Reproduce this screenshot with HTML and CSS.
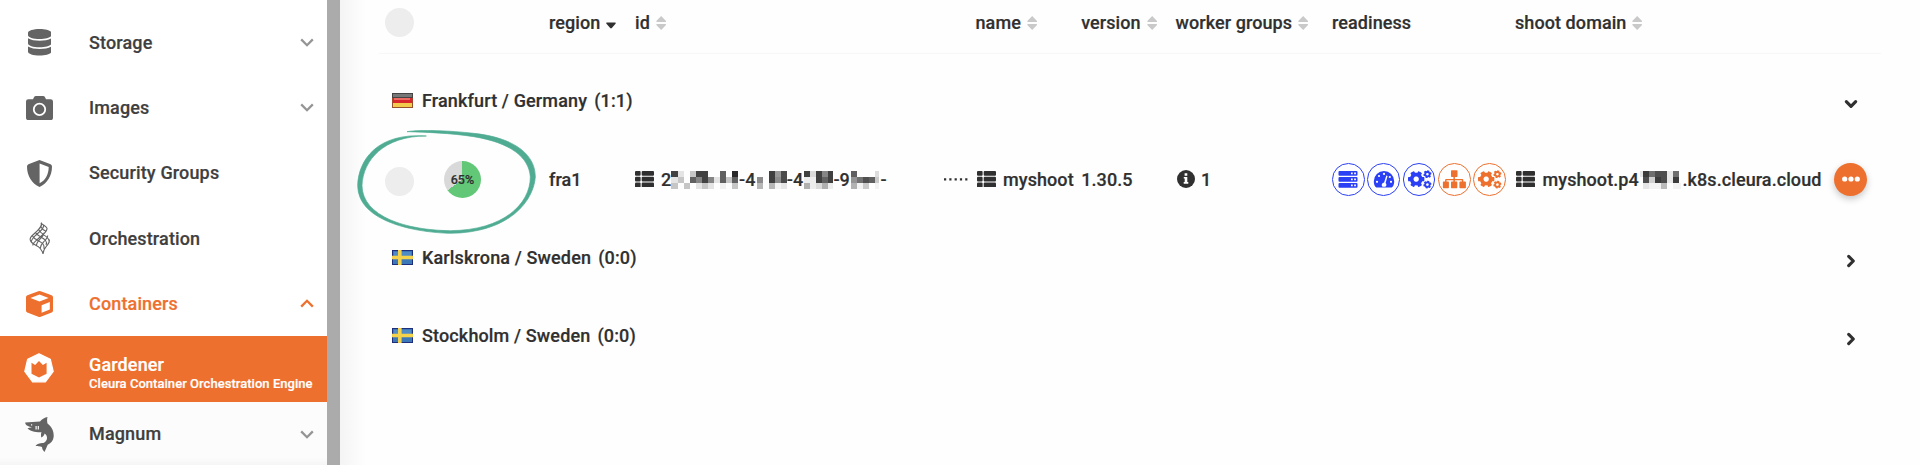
FILE: index.html
```html
<!DOCTYPE html>
<html lang="en">
<head>
<meta charset="utf-8">
<title>Gardener</title>
<link rel="stylesheet" href="styles.css">
</head>
<body>
<svg class="defs" width="0" height="0" aria-hidden="true">
  <symbol id="cog" viewBox="0 0 512 512"><path d="M487.4 315.7l-42.6-24.6c4.3-23.2 4.3-47 0-70.2l42.6-24.6c4.9-2.8 7.1-8.6 5.5-14-11.1-35.6-30-67.8-54.7-94.6-3.8-4.1-10-5.1-14.8-2.3L380.8 110c-17.9-15.4-38.5-27.3-60.8-35.1V25.8c0-5.6-3.9-10.5-9.4-11.7-36.7-8.2-74.3-7.8-109.2 0-5.5 1.2-9.4 6.1-9.4 11.7V75c-22.2 7.9-42.8 19.8-60.8 35.1L88.7 85.5c-4.9-2.8-11-1.9-14.8 2.3-24.7 26.7-43.6 58.9-54.7 94.6-1.7 5.4.6 11.2 5.5 14L67.3 221c-4.3 23.2-4.3 47 0 70.2l-42.6 24.6c-4.9 2.8-7.1 8.6-5.5 14 11.1 35.6 30 67.8 54.7 94.6 3.8 4.1 10 5.1 14.8 2.3l42.6-24.6c17.9 15.4 38.5 27.3 60.8 35.1v49.2c0 5.6 3.9 10.5 9.4 11.7 36.7 8.2 74.3 7.8 109.2 0 5.5-1.2 9.4-6.1 9.4-11.7v-49.2c22.2-7.9 42.8-19.8 60.8-35.1l42.6 24.6c4.9 2.8 11 1.9 14.8-2.3 24.7-26.7 43.6-58.9 54.7-94.6 1.5-5.5-.7-11.3-5.6-14.1zM256 336c-44.1 0-80-35.9-80-80s35.9-80 80-80 80 35.9 80 80-35.9 80-80 80z"/></symbol>
  <symbol id="cogs" viewBox="0 0 30 30">
    <use href="#cog" x="3.7" y="6.6" width="17" height="17" transform="rotate(30 12.2 15.1)"/>
    <use href="#cog" x="19.2" y="6" width="8.4" height="8.4" transform="rotate(15 23.4 10.2)"/>
    <use href="#cog" x="19.2" y="16.4" width="8.4" height="8.4" transform="rotate(15 23.4 20.6)"/>
  </symbol>
  <symbol id="sort" viewBox="0 0 10 14"><path d="M5 0L9.9 5.1Q10 6 9.2 6H.8Q0 6 .1 5.1zM5 14L9.9 8.9Q10 8 9.2 8H.8Q0 8 .1 8.9z"/></symbol>
  <symbol id="list" viewBox="0 0 19 16.4">
    <rect width="5.6" height="4.8" rx="1"/><rect x="6.7" width="12.3" height="4.8" rx="1"/>
    <rect y="5.8" width="5.6" height="4.8" rx="1"/><rect x="6.7" y="5.8" width="12.3" height="4.8" rx="1"/>
    <rect y="11.6" width="5.6" height="4.8" rx="1"/><rect x="6.7" y="11.6" width="12.3" height="4.8" rx="1"/>
  </symbol>
  <symbol id="down" viewBox="0 0 14 9"><path d="M1.2 1.4L7 7.2l5.8-5.8" fill="none" stroke="currentColor" stroke-width="2.3"/></symbol>
  <symbol id="angle" viewBox="0 0 12 12"><path d="M2 4l4 4 4-4" fill="none" stroke="currentColor" stroke-width="2.7" stroke-linecap="round" stroke-linejoin="round"/></symbol>
  <symbol id="sweden" viewBox="0 0 21 15">
    <rect width="21" height="15" fill="#1d2f7c"/><rect x="1" y="1" width="19" height="13" fill="#3c78b8"/><rect x="2" y="2" width="17" height="4" fill="#4f8cc6"/>
    <path d="M6 0h3.6v15H6zM0 5.8h21v3.4H0z" fill="#f5d24b"/>
  </symbol>
</svg>
<div class="app">
  <nav class="sidebar">
    <a class="item"><span class="ico"><svg width="23.4" height="26.6" viewBox="0 0 448 512" preserveAspectRatio="none"><path d="M448 73v46c0 40-100 73-224 73S0 159 0 119V73C0 33 100 0 224 0s224 33 224 73zM448 176v103c0 40-100 73-224 73S0 319 0 279V176c48 33 136 48 224 48s176-15 224-48zm0 160v103c0 40-100 73-224 73S0 479 0 439V336c48 33 136 48 224 48s176-15 224-48z"/></svg></span><span class="label">Storage</span><svg class="chev" width="14" height="9"><use href="#down"/></svg></a>
    <a class="item"><span class="ico"><svg width="27" height="24" viewBox="0 0 27 24"><path fill-rule="evenodd" d="M2.400 3.200H7l1-2Q8.500 0 10 0h7q1.500 0 2 1.200l1 2h4.600Q27 3.200 27 5.600v15.800Q27 24 24.600 24H2.400Q0 24 0 21.400V5.600Q0 3.200 2.400 3.200zM13.500 6.800a6.600 6.600 0 1 0 0 13.200 6.600 6.600 0 0 0 0-13.200z"/><circle cx="13.500" cy="13.400" r="4.800"/></svg></span><span class="label">Images</span><svg class="chev" width="14" height="9"><use href="#down"/></svg></a>
    <a class="item"><span class="ico"><svg width="25" height="27" viewBox="0 0 25 27"><path fill-rule="evenodd" d="M12.500 0L23.600 4.300Q25 5 25 6.500C25 16 20 23.500 12.500 27 5 23.500 0 16 0 6.500Q0 5 1.400 4.300zM12.600 3.400v19.900C18.200 20.500 21.700 14.500 21.700 7z"/></svg></span><span class="label">Security Groups</span></a>
    <a class="item"><span class="ico"><svg class="mesh" width="22" height="33" viewBox="0 0 22 33"><path d="M12 .8C14 4 10 7 6.500 10.500S.5 15 1.200 18M12 .8c2 2.500 4 2.500 6 5.200M18 6c.5 4-4 6-8 10s-6.500 5-6.200 7.500M14.500 3.500C15 7 11 9 7.500 12.500S2 17.500 2.300 20.500M1.200 18c1.500 5 7.500 5 10 8.500 1.500 2 2.500 3 2.800 5.500M3.500 14c2 4 7.500 4.500 10.500 8 1.200 1.500 1.500 3 1 5M6.500 10.500c2 4 7 4.500 10 8 1.300 1.500 1.300 3 .5 4.500M9.500 7.500c2 4 6 5 9.200 8.500 1.500 1.800 2 3 1.500 4.500M12 5c1 2 2.500 3 4.500 4M14 32c0-4 2-6 4-8.500s3-3.500 2.200-6M11.200 26.500c0-4 2.500-5.500 4.800-8s2.800-3 2.700-5M7.500 23.500c0-3.500 2.500-5.500 5-8s2.700-3 2.700-5"/></svg></span><span class="label">Orchestration</span></a>
    <a class="item open"><span class="ico"><svg width="27" height="26" viewBox="0 0 27 26"><path fill-rule="evenodd" d="M12.300.3q1.200-.5 2.400 0l10.900 3.900Q27 4.800 27 6.300v13.200q0 1.500-1.300 2.100l-11 4.200q-1.200.4-2.400 0l-11-4.200Q0 21 0 19.500V6.300Q0 4.800 1.400 4.200zM13.500 3.600L4.400 7l9.100 3.500L22.600 7zM15.600 14.200v7.600l8.200-3.400v-7.500z"/></svg></span><span class="label">Containers</span><svg class="chev up" width="14" height="9"><use href="#down"/></svg></a>
    <a class="item active"><span class="ico"><svg width="30" height="30" viewBox="0 0 30 30"><path fill-rule="evenodd" d="M15 .8L26.300 6.200 29.200 18.400 21.400 28.800H8.600L.8 18.400 3.700 6.200z" stroke="#fff" stroke-width="1.200" stroke-linejoin="round"/><path fill="#ee702e" d="M7.500 9.800l3.600 2.200L15 8l3.900 4 3.700-2.200v11L15 24.400l-7.500-3.600z"/></svg></span><span class="label">Gardener<small>Cleura Container Orchestration Engine</small></span></a>
    <a class="item sub"><span class="ico"><svg width="29" height="35" viewBox="0 0 29 35"><path d="M.2 5.500C5 5 10 5 15 4.500 17 2 20 .5 22.500 0c-.6 2.500-.5 4.500 0 6.500 4 3 6.500 7.500 6.200 13-.3 4-2.500 6.500-6 8.200-1 2.300-2 4.800-3.200 7.300-1.500-1.500-2.300-3-2.500-5-2-.8-4-1-6.500-1 2-2.500 4.700-3.200 8-3 2.500-1.300 3.700-3.200 3.500-5.500-.2-2-1-3.200-2.500-4-.2 1.800-1.200 3-3.200 4-.5-2-.5-3.600.2-5.200C10 15.500 5 14 2.500 11.500c1.500-1 3-1.200 4.500-1C4 9.500.2 8.500.2 5.500z"/><path d="M6 7.200h1.200v1.200H6zM10.500 9h1.200v3.500h-1.200zM12.700 9h1.200v3.500h-1.200z" fill="#fcfcfc"/></svg></span><span class="label">Magnum</span><svg class="chev" width="14" height="9"><use href="#down"/></svg></a>
  </nav>
  <div class="scrollbar"></div>
  <main class="content">
    <div class="grid head">
      <div class="select"><span class="check"></span></div>
      <div>region<svg class="caret" width="10" height="7" viewBox="0 0 10 7"><path d="M.8.400h8.400q1 .5.300 1.400L5.800 6q-.8.800-1.600 0L.5 1.800Q-.2.900.8.400z"/></svg></div>
      <div>id<svg class="sort" width="10.400" height="14"><use href="#sort"/></svg></div>
      <div>name<svg class="sort" width="10.400" height="14"><use href="#sort"/></svg></div>
      <div>version<svg class="sort" width="10.400" height="14"><use href="#sort"/></svg></div>
      <div>worker groups<svg class="sort" width="10.400" height="14"><use href="#sort"/></svg></div>
      <div>readiness</div>
      <div>shoot domain<svg class="sort" width="10.400" height="14"><use href="#sort"/></svg></div>
    </div>
    <section class="group">
      <svg class="flag" width="21" height="15" viewBox="0 0 21 15"><rect width="21" height="15" fill="#96502a"/><path fill="#444" d="M0 0h21v5H0z"/><path fill="#777" d="M1 1h19v3H1z"/><path fill="#d8262c" d="M.7 5h19.600v5H.7z"/><path fill="#ec6a62" d="M2 5h16v2H2z"/><path fill="#f3cb4c" d="M1 10h19v4H1z"/></svg>
      <span class="place">Frankfurt / Germany <span class="count">(1:1)</span></span>
      <svg class="toggle" width="14" height="14"><use href="#angle"/></svg>
    </section>
    <div class="grid row">
      <div class="select"><span class="check low"></span><span class="pie">65%</span></div>
      <div>fra1</div>
      <div class="ident">
        <svg class="list" width="19" height="16.400"><use href="#list"/></svg><span class="n1">2</span>
        <svg class="mosaic" width="68" height="18" viewBox="0 0 68 18" shape-rendering="crispEdges"><path fill="#424242" d="M0 0h7v6H0zM25 0h6v6h-6zM31 0h6v12h-6z"/><path fill="#e4e4e4" d="M7 0h6v6H7zM0 6h7v6H0zM25 12h6v6h-6zM37 12h6v6h-6zM43 6h6v6h-6z"/><path fill="#c6c6c6" d="M19 0h6v6h-6zM7 6h6v6H7zM0 12h7v6H0zM13 12h6v6h-6zM31 12h6v6h-6zM55 6h6v6h-6zM61 12h6v6h-6z"/><path fill="#606060" d="M19 6h6v6h-6zM49 0h6v12h-6zM61 6h6v6h-6z"/><path fill="#858585" d="M25 6h6v6h-6zM37 6h6v6h-6z"/><path fill="#292929" d="M61 0h6v6h-6z"/><path fill="#f1f1f1" d="M49 12h6v6h-6z"/></svg><span class="n2">-4</span>
        <svg class="mosaic" width="30" height="18" viewBox="0 0 30 18" shape-rendering="crispEdges"><path fill="#8c8c8c" d="M0 6h6v6H0zM18 6h6v6h-6z"/><path fill="#b7b7b7" d="M0 12h6v6H0zM12 12h6v6h-6z"/><path fill="#404040" d="M12 0h6v12h-6z"/><path fill="#999" d="M18 0h6v6h-6z"/><path fill="#4b4b4b" d="M24 0h6v12h-6z"/><path fill="#f4f4f4" d="M18 12h6v6h-6z"/><path fill="#e6e6e6" d="M24 12h6v6h-6z"/></svg><span class="n2">-4</span>
        <svg class="mosaic" width="29" height="18" viewBox="0 0 29 18" shape-rendering="crispEdges"><path fill="#404040" d="M0 0h6v6H0zM12 0h6v12h-6zM24 0h5v12h-5z"/><path fill="#ededed" d="M0 6h6v6H0zM6 6h6v12H6zM24 12h5v6h-5z"/><path fill="#b0b0b0" d="M0 12h6v6H0zM18 12h6v6h-6z"/><path fill="#dadada" d="M6 0h6v6H6zM12 12h6v6h-6z"/><path fill="#858585" d="M18 0h6v6h-6z"/><path fill="#626262" d="M18 6h6v6h-6z"/></svg><span class="n2 n3">-9</span>
        <svg class="mosaic" width="29" height="18" viewBox="0 0 29 18" shape-rendering="crispEdges"><path fill="#606060" d="M0 0h6v6H0zM18 6h6v6h-6z"/><path fill="#949494" d="M0 6h6v6H0z"/><path fill="#b2b2b2" d="M0 12h6v6H0z"/><path fill="#727272" d="M6 6h6v6H6z"/><path fill="#505050" d="M12 6h6v6h-6z"/><path fill="#cacaca" d="M12 12h6v6h-6zM24 6h4v6h-4z"/><path fill="#ddd" d="M24 0h4v6h-4z"/><path fill="#f3f3f3" d="M24 12h4v6h-4zM6 12h6v6H6z"/></svg><span>-</span>
        <svg class="dots" width="24" height="3" viewBox="0 0 24 3"><path d="M0 .3h2.200v2.200H0zM5.300.3h2.200v2.200H5.300zM10.600.3h2.200v2.200h-2.200zM15.900.3h2.200v2.200h-2.200zM21.200.3h2.200v2.200h-2.200z"/></svg>
      </div>
      <div class="named"><svg class="list" width="19" height="16.400"><use href="#list"/></svg>myshoot</div>
      <div>1.30.5</div>
      <div class="workers"><svg width="18" height="18" viewBox="0 0 18 18"><circle cx="9" cy="9" r="9"/><path fill="#fff" d="M7.600 3.300h2.700v2.500H7.600zM6.800 7h3.500v5h1v1.700H6.700V12h1V8.600h-.9z"/></svg>1</div>
      <div class="ready">
        <span class="dot"><svg width="30" height="30" viewBox="0 0 30 30"><path fill-rule="evenodd" d="M6.500 7h17q1 0 1 1v2.700q0 1-1 1h-17q-1 0-1-1V8q0-1 1-1zM18 8.500v1.700h1.700V8.500zM21.200 8.500v1.700h1.700V8.500zM6.500 13h17q1 0 1 1v2.700q0 1-1 1h-17q-1 0-1-1V14q0-1 1-1zM18 14.500v1.700h1.700v-1.700zM21.200 14.500v1.700h1.700v-1.700zM6.500 19h17q1 0 1 1v2.700q0 1-1 1h-17q-1 0-1-1V20q0-1 1-1zM18 20.500v1.700h1.700v-1.700zM21.200 20.500v1.700h1.700v-1.700z"/></svg></span>
        <span class="dot"><svg width="30" height="30" viewBox="0 0 30 30"><path d="M15 7a10.200 10.200 0 0 0-10.200 10.200c0 2 .5 3.900 1.400 5.400q.4.800 1.200.8h15.200q.8 0 1.200-.8c.9-1.500 1.400-3.400 1.400-5.400A10.200 10.200 0 0 0 15 7z"/><g fill="#fff"><circle cx="15" cy="9.900" r="1.100"/><circle cx="10" cy="12" r="1.100"/><circle cx="8" cy="17.800" r="1.100"/><circle cx="22" cy="17.800" r="1.100"/><circle cx="20.800" cy="13" r="1.100"/><path d="M17.300 11.500l1.300.4-2 7.100q1 1 .8 2.300-.2 1-1 1.400h-2.800q-1-.7-.9-2 .3-1.900 2.400-2.100z"/></g></svg></span>
        <span class="dot"><svg width="30" height="30"><use href="#cogs"/></svg></span>
        <span class="dot warn"><svg width="30" height="30" viewBox="0 0 30 30"><path d="M12.700 6.300h5.100q.7 0 .7.700v5.200q0 .7-.7.700h-1.900v2h7.400q1 0 1 1v1.600h1.800q.8 0 .8.800v5.200q0 .7-.7.700h-5.100q-.7 0-.7-.7v-5.200q0-.8.7-.8h1.700v-1.200h-6.900v1.200h1.700q.7 0 .7.800v5.200q0 .7-.7.700h-4.900q-.7 0-.7-.7v-5.200q0-.8.7-.8h1.700v-1.200H7.500v1.200h1.700q.7 0 .7.800v5.200q0 .7-.7.700H4.600q-.7 0-.7-.7v-5.200q0-.8.7-.8h1.500v-1.600q0-1 1-1h7.300v-2h-1.700q-.7 0-.7-.7V7q0-.7.7-.7z"/></svg></span>
        <span class="dot warn"><svg width="30" height="30"><use href="#cogs"/></svg></span>
      </div>
      <div class="domain"><svg class="list" width="19" height="16.400"><use href="#list"/></svg><span class="host">myshoot.p4</span><svg class="mosaic" width="42" height="18" viewBox="0 0 42 18" shape-rendering="crispEdges"><path fill="#e5e5e5" d="M0 0h3v6H0zM3 12h6v6H3z"/><path fill="#3b3b3b" d="M3 0h6v6H3zM15 6h6v6h-6zM33 6h6v6h-6z"/><path fill="#4d4d4d" d="M3 6h6v6H3zM15 0h12v6H15zM21 6h6v6h-6z"/><path fill="#6e6e6e" d="M9 0h6v6H9zM33 0h6v6h-6z"/><path fill="#cfcfcf" d="M9 6h6v6H9z"/><path fill="#e9e9e9" d="M27 0h6v12h-6z"/><path fill="#f2f2f2" d="M9 12h12v6H9zM33 12h8v6h-8z"/><path fill="#bbb" d="M21 12h6v6h-6z"/></svg>.k8s.cleura.cloud</div>
      <div><button class="more" aria-label="More"><svg width="18" height="6" viewBox="0 0 18 6"><circle cx="2.700" cy="3" r="2.600"/><circle cx="9" cy="3" r="2.600"/><circle cx="15.300" cy="3" r="2.600"/></svg></button></div>
    </div>
    <section class="group">
      <svg class="flag" width="21" height="15"><use href="#sweden"/></svg>
      <span class="place">Karlskrona / Sweden <span class="count">(0:0)</span></span>
      <svg class="toggle closed" width="14" height="14"><use href="#angle"/></svg>
    </section>
    <section class="group">
      <svg class="flag" width="21" height="15"><use href="#sweden"/></svg>
      <span class="place">Stockholm / Sweden <span class="count">(0:0)</span></span>
      <svg class="toggle closed" width="14" height="14"><use href="#angle"/></svg>
    </section>
    <svg class="highlight" width="180" height="104" viewBox="50 389 540 312"><path d="M200 394C240 387 330 391 400 399 500 409 585 450 585 530 580 600 510 697 330 699 240 697 52 670 52 555 54 480 110 396 258 407 130 407 68 480 65 555 66 650 200 690 330 691 490 690 570 610 570 530 566 470 510 427 400 409 330 398 260 396 200 394Z"/></svg>
  </main>
</div>
</body>
</html>
```
FILE: styles.css
```css
* { box-sizing: border-box; }
body {
  margin: 0;
  font-family: Roboto, "Liberation Sans", sans-serif;
  font-weight: 500;
  font-size: 18px;
  letter-spacing: .08px;
  -webkit-text-stroke: .2px currentColor;
  color: #303030;
  background: #fefefe;
}
.defs { display: block; height: 0; }
svg { flex: none; fill: currentColor; }
.app { display: flex; height: 465px; overflow: hidden; }

.sidebar {
  width: 327px;
  flex: none;
  padding-top: 10px;
  background: #fff;
  color: #3f3f3f;
  letter-spacing: .14px;
}
.item { display: flex; align-items: center; height: 65.3px; padding-right: 13px; }
.ico { width: 79px; margin-right: 10px; display: flex; justify-content: center; color: #646464; }
.label { flex: 1; white-space: nowrap; padding-bottom: 1px; }
.chev { color: #959595; }
.up { transform: rotate(180deg); }
.open, .open .ico, .open .chev { color: #ee702e; }
.active { background: #ee702e; color: #fff; padding-right: 0; }
.active .ico { color: #fff; width: 77px; margin-right: 12px; padding-bottom: 3px; }
.label small { display: block; font-size: 13px; line-height: 16px; margin-top: 1px; letter-spacing: .04px; }
.active .label { padding-top: 9px; }
.sub { background: linear-gradient(#fcfcfc 85%, #f4f4f4); }
.scrollbar { width: 13px; flex: none; background: #ababab; }

.content {
  position: relative;
  flex: 1;
  padding: 0 39.500px 0 39px;
  background: linear-gradient(90deg, #f4f4f4, #fefefe 26px);
}
.grid {
  display: grid;
  grid-template-columns: 170px 86px 340.500px 105.700px 94.300px 156.500px 183px 319.500px 1fr;
  align-items: center;
  white-space: nowrap;
}
.grid > div { display: flex; align-items: center; }
.head { height: 54px; padding-bottom: 8px; border-bottom: 1px solid #f7f7f7; margin-bottom: 7.600px; }
.sort { margin-left: 6px; color: #c9c9c9; }
.caret { margin: 6px 0 0 6px; }
.select { padding-left: 6px; }
.check { width: 29px; height: 29px; border-radius: 50%; background: #ededed; }
.low { margin-top: 4px; }
.pie {
  width: 37px;
  height: 37px;
  margin-left: 30px;
  border-radius: 50%;
  background: conic-gradient(#62c878 65%, #d9d9d9 0);
  font-size: 12.500px;
  line-height: 37px;
  text-align: center;
}
.group { display: flex; align-items: center; height: 78.400px; padding: 0 23px 0 13px; }
.place { margin-left: 9px; flex: 1; letter-spacing: .14px; padding-bottom: 1px; }
.count { margin-left: 2.500px; }
.toggle { position: relative; top: 3px; }
.closed { transform: rotate(-90deg); }
.row { height: 78.400px; }
.list { margin-right: 7px; }
.mosaic { margin-top: 2px; }
.n1 { width: 10px; }
.n2 { width: 17.700px; }
.n3 { width: 18px; }
.dots { margin-left: auto; margin-right: 7.500px; }
.named .list, .domain .list { margin-left: 1px; margin-right: 7.500px; }
.workers svg { margin: 0 6px 0 1.500px; }
.host { width: 98px; }
.ready { gap: 2.600px; }
.dot {
  width: 32.700px;
  height: 32.700px;
  border: 1.300px solid;
  border-radius: 50%;
  display: flex;
  align-items: center;
  justify-content: center;
  color: #2b40f5;
}
.warn { color: #ee702e; }
.more {
  width: 33px;
  height: 33px;
  padding: 0;
  border: 0;
  border-radius: 50%;
  background: #ee702e;
  color: #fff;
  display: flex;
  align-items: center;
  justify-content: center;
  box-shadow: 0 3px 7px rgba(0, 0, 0, .22);
}
.mesh { fill: none; stroke: currentColor; stroke-width: 1.100; }
.highlight { position: absolute; left: 16.700px; top: 129.700px; color: #4fac92; stroke: currentColor; stroke-width: 2; }
```
